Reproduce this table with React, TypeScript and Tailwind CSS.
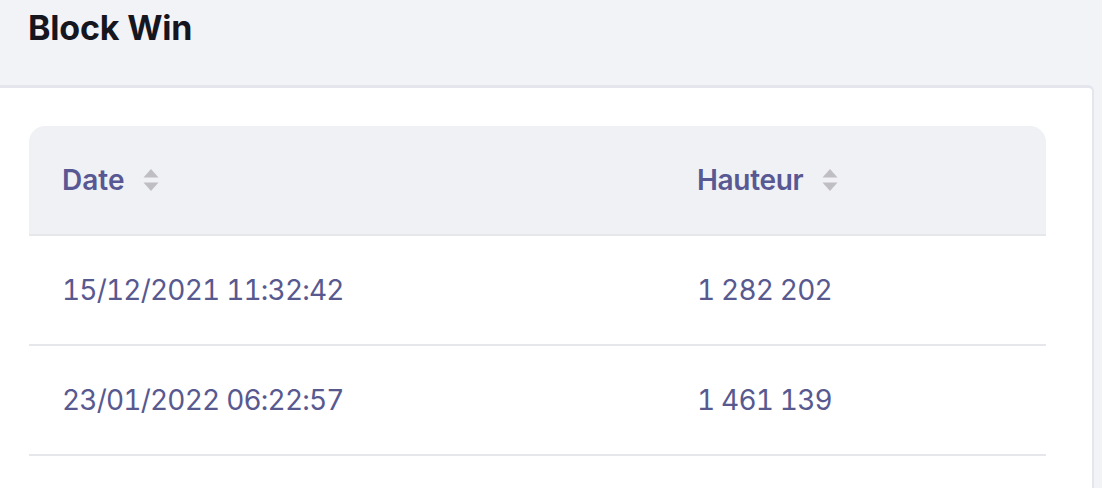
const rows = [
  { date: '15/12/2021 11:32:42', height: '1 282 202' },
  { date: '23/01/2022 06:22:57', height: '1 461 139' },
]

const SortIcon = () => (
  <svg width="16" height="22" viewBox="0 0 16 22" className="ml-[19px]">
    <path d="M8 0 L15.5 8.5 L0.5 8.5 Z" fill="#bfbfc3" />
    <path d="M8 22 L15.5 13.5 L0.5 13.5 Z" fill="#bfbfc3" />
  </svg>
)

export default function App() {
  return (
    <div className="flex h-[488px] w-[1102px] flex-col overflow-hidden bg-[#f2f3f7] font-['Inter',sans-serif]">
      <div className="flex h-[85px] shrink-0 items-start px-[28px] pt-[5px]">
        <h1 className="text-[34px] leading-[46px] font-bold tracking-[-0.2px] text-[#16161f]">Block Win</h1>
      </div>
      <div className="flex flex-1">
        <div className="w-[1094px] shrink-0 rounded-tr-[6px] border-t-[3px] border-r-[2px] border-[#e4e5ed] bg-white pt-[38px] pl-[29px]">
          <table className="w-[1017px] border-collapse text-left">
            <thead>
              <tr className="border-b-2 border-[#e5e7eb]">
                <th className="h-[109px] w-[635px] rounded-tl-[16px] bg-[#f0f1f4] pl-[33px] font-semibold">
                  <div className="flex items-center text-[28px] text-[#585893]">
                    Date
                    <SortIcon />
                  </div>
                </th>
                <th className="h-[109px] rounded-tr-[16px] bg-[#f0f1f4] pl-[33px] font-semibold">
                  <div className="flex items-center text-[28px] tracking-[-0.3px] text-[#585893]">
                    Hauteur
                    <SortIcon />
                  </div>
                </th>
              </tr>
            </thead>
            <tbody>
              {rows.map((r) => (
                <tr key={r.date} className="border-b-2 border-[#e5e7eb]">
                  <td className="h-[110px] pl-[33px] text-[28px] tracking-[-0.8px] text-[#57598f] tabular-nums">{r.date}</td>
                  <td className="h-[110px] pl-[33px] text-[28px] tracking-[-0.8px] text-[#57598f] tabular-nums">{r.height}</td>
                </tr>
              ))}
            </tbody>
          </table>
        </div>
      </div>
    </div>
  )
}
